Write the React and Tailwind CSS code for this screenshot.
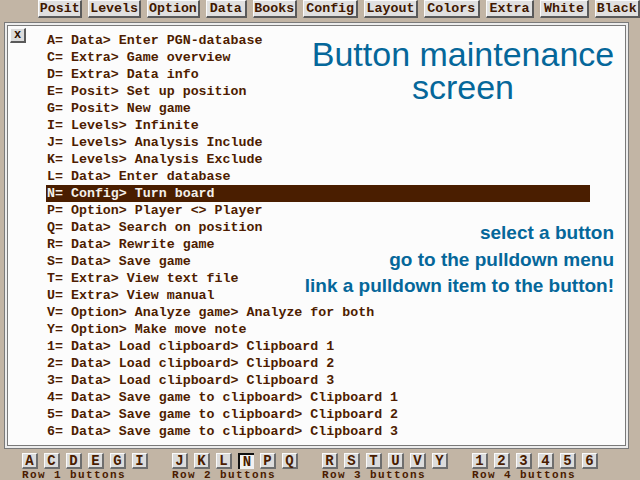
import React from "react";

const menu = [
  { label: "Posit", w: "w-[45px]" },
  { label: "Levels", w: "w-[53px]" },
  { label: "Option", w: "w-[54px]" },
  { label: "Data", w: "w-[41px]" },
  { label: "Books", w: "w-[45px]" },
  { label: "Config", w: "w-[56px]" },
  { label: "Layout", w: "w-[54px]" },
  { label: "Colors", w: "w-[57px]" },
  { label: "Extra", w: "w-[49px]" },
  { label: "White", w: "w-[49px]" },
  { label: "Black", w: "w-[46px]" },
];

const rows = [
  "A= Data> Enter PGN-database",
  "C= Extra> Game overview",
  "D= Extra> Data info",
  "E= Posit> Set up position",
  "G= Posit> New game",
  "I= Levels> Infinite",
  "J= Levels> Analysis Include",
  "K= Levels> Analysis Exclude",
  "L= Data> Enter database",
  "N= Config> Turn board",
  "P= Option> Player <> Player",
  "Q= Data> Search on position",
  "R= Data> Rewrite game",
  "S= Data> Save game",
  "T= Extra> View text file",
  "U= Extra> View manual",
  "V= Option> Analyze game> Analyze for both",
  "Y= Option> Make move note",
  "1= Data> Load clipboard> Clipboard 1",
  "2= Data> Load clipboard> Clipboard 2",
  "3= Data> Load clipboard> Clipboard 3",
  "4= Data> Save game to clipboard> Clipboard 1",
  "5= Data> Save game to clipboard> Clipboard 2",
  "6= Data> Save game to clipboard> Clipboard 3",
];

const groups = [
  { name: "Row 1 buttons", keys: ["A", "C", "D", "E", "G", "I"] },
  { name: "Row 2 buttons", keys: ["J", "K", "L", "N", "P", "Q"] },
  { name: "Row 3 buttons", keys: ["R", "S", "T", "U", "V", "Y"] },
  { name: "Row 4 buttons", keys: ["1", "2", "3", "4", "5", "6"] },
];

const KeyButton = ({ k, selected }) => (
  <div
    className={
      selected
        ? "w-[16px] h-[16px] flex items-center justify-center bg-[#f2f2f2] border-t-2 border-l-2 border-[#101010] text-[14px] font-bold leading-none text-[#4a1c00]"
        : "w-[16px] h-[16px] flex items-center justify-center bg-[#dcdcdc] border-t border-l border-[#fafafa] border-b-2 border-r-2 border-b-[#6e6e6e] border-r-[#6e6e6e] text-[14px] font-bold leading-none text-[#4a1c00]"
    }
  >
    {k}
  </div>
);

export default function App() {
  return (
    <div className="w-[640px] h-[480px] overflow-hidden bg-[#c2b5a5] font-['Liberation_Mono',monospace] select-none">
      {/* pulldown menu bar */}
      <div className="flex h-[22px] pl-[38px] gap-[6px]">
        {menu.map((m) => (
          <div
            key={m.label}
            className={`${m.w} h-[18px] flex items-center justify-center bg-[#e0e0e0] border-t border-l border-[#fafafa] border-b-2 border-r-2 border-b-[#5a5a5a] border-r-[#5a5a5a] text-[13.3px] font-bold leading-none text-[#401800]`}
          >
            {m.label}
          </div>
        ))}
      </div>

      {/* main panel */}
      <div className="ml-[4px] w-[625px] h-[427px] border border-[#7a7a7a] bg-[#ededed] p-[2px]">
        <div className="relative h-full border border-[#7a7a7a] bg-[#fcfcfc] flex">
          <div className="pl-[2px] pt-[2px]">
            <div className="w-[16px] h-[15px] flex items-center justify-center bg-[#dcdcdc] border-t border-l border-[#fafafa] border-b-2 border-r-2 border-b-[#5a5a5a] border-r-[#5a5a5a] text-[12px] font-bold leading-none text-[#301000]">
              x
            </div>
          </div>
          <div className="ml-[20px] pt-[6px] w-[544px]">
            {rows.map((r) => (
              <div
                key={r}
                className={
                  r.startsWith("N=")
                    ? "h-[17px] pl-[1px] bg-[#4a1e00] text-[#f4f0ea] text-[13.3px] font-bold leading-[17px] whitespace-pre"
                    : "h-[17px] pl-[1px] text-[#4e1c00] text-[13.3px] font-bold leading-[17px] whitespace-pre"
                }
              >
                {r}
              </div>
            ))}
          </div>

          <div className="absolute left-[285px] top-[12px] w-[340px] text-center font-['Liberation_Sans',Arial,sans-serif] text-[34px] leading-[33px] text-[#05679a]">
            <div className="h-[33px]">Button maintenance</div>
            <div className="h-[33px]">screen</div>
          </div>

          <div className="absolute right-[11px] top-[194px] text-right font-['Liberation_Sans',Arial,sans-serif] font-bold text-[19px] leading-[26.5px] text-[#05679a]">
            <div>select a button</div>
            <div>go to the pulldown menu</div>
            <div>link a pulldown item to the button!</div>
          </div>
        </div>
      </div>

      {/* button rows */}
      <div className="flex pl-[22px] pt-[4px] gap-[24px]">
        {groups.map((g) => (
          <div key={g.name} className="flex flex-col">
            <div className="flex gap-[6px]">
              {g.keys.map((k) => (
                <KeyButton key={k} k={k} selected={k === "N"} />
              ))}
            </div>
            <div className="mt-[1px] text-[11px] tracking-[1.4px] leading-[10px] font-bold text-[#4a1c00] whitespace-pre">
              {g.name}
            </div>
          </div>
        ))}
      </div>
    </div>
  );
}
